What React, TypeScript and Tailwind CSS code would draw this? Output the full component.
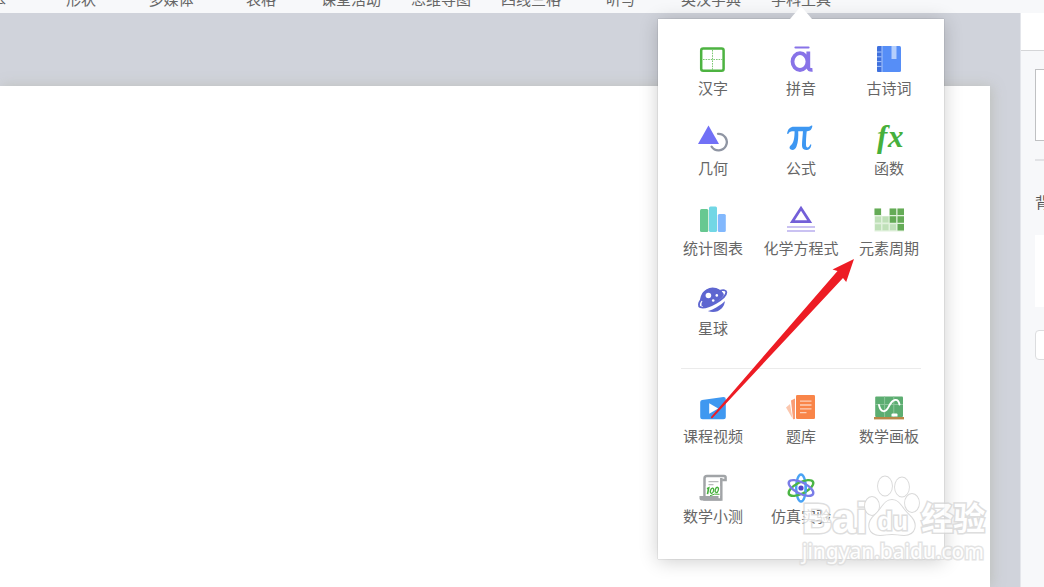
import type { ReactNode } from "react";

const tabs = ["文本", "形状", "多媒体", "表格", "课堂活动", "思维导图", "四线三格", "听写", "英汉字典"];

function Icon({ children }: { children: ReactNode }) {
  return (
    <svg viewBox="0 0 32 32" className="h-8 w-8" fill="none" aria-hidden="true">
      {children}
    </svg>
  );
}

const HanziIcon = (
  <Icon>
    <rect x="4.2" y="4.6" width="22.4" height="22.2" rx="2" stroke="#4db341" strokeWidth="2.5" />
    <path d="M15.5 6v20M6 15.5h20" stroke="#7cc873" strokeWidth="1" strokeDasharray="1.6 1" />
  </Icon>
);

const PinyinIcon = (
  <Icon>
    <path d="M10.500 3.500h13" stroke="#8873e8" strokeWidth="2.200" strokeLinecap="round" />
    <ellipse cx="15" cy="17.600" rx="7.500" ry="8.400" stroke="#8873e8" strokeWidth="3.800" />
    <path d="M23.300 7.500v15.700q0 3 4.200 2.600" stroke="#8873e8" strokeWidth="3.800" />
  </Icon>
);

const PoemIcon = (
  <Icon>
    <rect x="4" y="2" width="24" height="26" rx="1.5" fill="#568ef7" />
    <path d="M5.5 2H9v26H5.5q-1.5 0-1.5-1.5v-23Q4 2 5.5 2z" fill="#3f70dd" />
    <path d="M9 2v26M4 8h4.500M4 12.800h4.500M4 17.600h4.500M4 22.400h4.500" stroke="#a9c6fb" strokeWidth="1" />
    <path d="M18.500 2h5v13h-5z" fill="#b5cffc" />
  </Icon>
);

const GeometryIcon = (
  <Icon>
    <path d="M21 9.800a8.300 8.300 0 1 1-6.400 12.900" stroke="#8f95a3" strokeWidth="2.300" strokeLinecap="round" />
    <path d="M11.500 1.500L22 20H1z" fill="#7170f6" />
  </Icon>
);

const PiIcon = (
  <Icon>
    <path d="M2 9.800C3 4.800 5 2.800 9 2.800h13.500c2 0 3-.300 3.700-1.300l1.200.300c-.600 4-2.400 5.400-5.200 5.400H9c-3 0-4.700.400-5.800 2.700z" fill="#3d97f2" />
    <path d="M9.600 6.500h3.600c.300 6.300 0 11.500-1.700 16-1 2.800-3 3.900-5.200 3.300-2.100-.700-2.400-3.100-.700-4.400C8.700 19.300 9.600 14 9.600 6.500zM18 6.500h3.800c-.600 5.800-.900 11-.8 14.500.1 2.200 1 2.700 2.200 2.200 1-.500 1.600-1.400 2.200-2.900l1 .400c-.600 3.900-2.500 5.400-5.200 5.300-3.200-.1-4.300-2-4.200-5.400.1-4 .7-8.600 1-14.100z" fill="#3d97f2" />
  </Icon>
);

const FunctionIcon = (
  <Icon>
    <text
      y="22.500"
      className="font-['Liberation_Serif',serif] text-[31px] font-bold italic"
      fill="#46b03c"
    >
      <tspan x="4">f</tspan>
      <tspan x="15">x</tspan>
    </text>
  </Icon>
);

const ChartIcon = (
  <Icon>
    <rect x="3" y="5" width="8.300" height="23" rx="1.500" fill="#67c891" />
    <rect x="12" y="2.500" width="8" height="25.500" rx="1.500" fill="#72d7e5" />
    <rect x="20.800" y="10" width="8" height="18" rx="1.500" fill="#82b8fd" />
  </Icon>
);

const ChemistryIcon = (
  <Icon>
    <path d="M16 4.200L24.700 17.700H7.300z" stroke="#735fd8" strokeWidth="2.700" />
    <path d="M2 23h28M2 27h28" stroke="#b9afee" strokeWidth="1.600" />
  </Icon>
);

const PeriodicIcon = (
  <Icon>
    <path d="M1.500 4.500h7v7.500h7.500V4.500h15v23h-29.500z" fill="#e0f1dc" />
    <path d="M2 12.500h6v6H2zM2 20.200h6v6H2zM9.500 12.500h6v6h-6zM9.500 20.200h6v6h-6zM17 20.200h6v6h-6z" fill="#bfe0b8" />
    <path d="M1.500 4.500h6.500v6.500H1.500zM16.700 4.500h6.500v6.500h-6.500zM24.500 4.500H31v6.500h-6.500zM16.700 12.200h6.500v6.500h-6.500zM24.500 12.200H31v6.500h-6.500zM24.500 20H31v6.500h-6.500z" fill="#64ab56" />
  </Icon>
);

const PlanetIcon = (
  <Icon>
    <circle cx="16" cy="16" r="12" fill="#5e66d0" />
    <path d="M4.500 17.500c-3 4-3 6.600-1.500 7.300 6.500 3 25-7.300 26.500-14.300" stroke="#ffffff" strokeWidth="4.600" />
    <path d="M4.800 22A12 12 0 0 1 26.500 10C22.500 16.500 12 22.500 4.800 22z" fill="#5e66d0" />
    <path d="M4.600 14.800c-3.300 4.600-3.300 7.700-1.300 8.400C10 25.500 29.300 14.500 29.300 8.300c0-2.300-3-2.500-6.500-1.500" stroke="#5e66d0" strokeWidth="1.900" />
    <path d="M5 17c-1.200 2-1.500 3.400-1 4M25 7.500c1.800-.2 2.600.2 2.700 1" stroke="#fff" strokeWidth="1.100" />
    <circle cx="11.400" cy="11.500" r="2.800" fill="#fff" />
    <circle cx="19.800" cy="11.400" r="1.300" fill="#fff" />
    <circle cx="16.200" cy="16.500" r="1.300" fill="#fff" />
  </Icon>
);

const VideoIcon = (
  <Icon>
    <path d="M5 8L26.500 5q2.300 0 2.300 2.300v17.500q0 2.500-2.500 2.500H5.700q-2.500 0-2.500-2.500V10.200Q3.200 8.200 5 8z" fill="#3f98f0" />
    <path d="M12.200 11.200v10.600l9-5.300z" fill="#fff" />
  </Icon>
);

const QuestionIcon = (
  <Icon>
    <path d="M1 15.500l4-3.500 2.500 14.500z" fill="#fbc7ae" />
    <path d="M6 8.500L10 6.500V27l-2 .300z" fill="#fa9d75" />
    <rect x="11" y="3" width="19" height="24" rx="1.300" fill="#f98549" />
    <path d="M15 9.200h11.500M15 13h11.500M15 16.800h11.500M15 20.600h6.500" stroke="#fdd0b9" strokeWidth="1.300" />
  </Icon>
);

const BoardIcon = (
  <Icon>
    <rect x="2.200" y="4.500" width="27.800" height="20.500" rx="1" fill="#5cad71" />
    <path d="M11.600 4.500V25M2.200 12.500H30M20.800 4.500V25" stroke="#8cc69a" strokeWidth="1" />
    <path d="M6 13c1.500 7.500 6.500 8.500 10 1.200S25 5.500 26.500 12.500" stroke="#fff" strokeWidth="1.900" strokeLinecap="round" />
    <path d="M18.500 24.500v-2q0-1 1-1h4q1 0 1 1v2z" fill="#fff" />
    <rect x="1" y="25" width="30" height="2.400" fill="#b98748" />
  </Icon>
);

const QuizIcon = (
  <Icon>
    <path d="M24.300 6v21.500H7.500V6.500Q7.500 4 10 4h17q1.600 0 1.600 1.500V8h-3" stroke="#a1a4a7" strokeWidth="2.500" />
    <path d="M2.500 24h19v2.500l3 2H4.500q-2 0-2-2z" fill="#a1a4a7" />
    <path d="M8.800 14h14.300v10H8.800z" fill="#fff" />
    <path d="M11.500 9.600h10M11.500 12.600h5" stroke="#b9bbbd" strokeWidth="1.400" />
    <path d="M10 16.800l1.700-.9-1.200 6.300" stroke="#46b03c" strokeWidth="1.600" />
    <ellipse cx="15" cy="18.700" rx="1.500" ry="2.700" transform="rotate(16 15 18.700)" stroke="#46b03c" strokeWidth="1.300" />
    <ellipse cx="19.800" cy="17.900" rx="1.500" ry="2.700" transform="rotate(16 19.800 17.900)" stroke="#46b03c" strokeWidth="1.300" />
    <path d="M13 23.800q4.500-2.600 9.500-1.500" stroke="#46b03c" strokeWidth="1" />
  </Icon>
);

const AtomIcon = (
  <Icon>
    <ellipse cx="16" cy="16" rx="4.800" ry="13.500" stroke="#4aa3f5" strokeWidth="2.400" />
    <ellipse cx="16" cy="16" rx="13.500" ry="5.600" transform="rotate(-27 16 16)" stroke="#4bb544" strokeWidth="2.400" />
    <ellipse cx="16" cy="16" rx="13.500" ry="5.600" transform="rotate(27 16 16)" stroke="#7a7de8" strokeWidth="2.400" />
    <path d="M20.800 13.500q.2 3.500-.4 7" stroke="#4aa3f5" strokeWidth="2.400" />
    <circle cx="16" cy="16" r="2.600" fill="#5546c9" />
  </Icon>
);

type Tool = { name: string; icon: ReactNode };

const subjectTools: Tool[] = [
  { name: "汉字", icon: HanziIcon },
  { name: "拼音", icon: PinyinIcon },
  { name: "古诗词", icon: PoemIcon },
  { name: "几何", icon: GeometryIcon },
  { name: "公式", icon: PiIcon },
  { name: "函数", icon: FunctionIcon },
  { name: "统计图表", icon: ChartIcon },
  { name: "化学方程式", icon: ChemistryIcon },
  { name: "元素周期", icon: PeriodicIcon },
  { name: "星球", icon: PlanetIcon },
];

const resourceTools: Tool[] = [
  { name: "课程视频", icon: VideoIcon },
  { name: "题库", icon: QuestionIcon },
  { name: "数学画板", icon: BoardIcon },
  { name: "数学小测", icon: QuizIcon },
  { name: "仿真实验", icon: AtomIcon },
];

function ToolGrid({ tools }: { tools: Tool[] }) {
  return (
    <div className="grid grid-cols-3">
      {tools.map((tool) => (
        <button
          key={tool.name}
          type="button"
          className="flex h-20 flex-col items-center gap-px whitespace-nowrap text-[15px] leading-[22px] text-[#666666]"
        >
          {tool.icon}
          {tool.name}
        </button>
      ))}
    </div>
  );
}

function SubjectMenu() {
  return (
    <div className="absolute top-[19px] left-1/2 w-[286px] -translate-x-1/2 bg-white px-[11px] pt-[25px] pb-[7px] shadow-[0_2px_18px_rgba(0,0,0,0.2),0_0_1px_rgba(0,0,0,0.35)]">
      <svg viewBox="0 0 22 12" className="absolute -top-3 left-1/2 h-3 w-[22px] -translate-x-1/2" aria-hidden="true">
        <path d="M0 12L9.500 1q1.500-1 3 0L22 12z" fill="#fff" />
      </svg>
      <ToolGrid tools={subjectTools} />
      <hr className="mx-3 mt-1 mb-[23px] border-[#ebebeb]" />
      <ToolGrid tools={resourceTools} />
    </div>
  );
}

function Watermark() {
  return (
    <div className="pointer-events-none absolute top-[475px] right-[55px] z-30 w-[187px] font-['Liberation_Sans','Noto_Sans_CJK_SC',sans-serif] text-white opacity-80 [paint-order:stroke_fill] [-webkit-text-stroke:3px_#d6d6d6]">
      <div className="flex h-[62px] items-end">
        <span className="text-[42px] leading-9 font-bold">Bai</span>
        <div className="relative -ml-1 h-[62px] w-[58px]">
          <svg viewBox="0 0 58 62" className="h-[62px] w-[58px]" fill="#fff" stroke="#d0d0d0" strokeWidth="1.800" aria-hidden="true">
            <ellipse cx="9" cy="31" rx="7" ry="9" />
            <ellipse cx="22" cy="11" rx="7" ry="9.500" />
            <ellipse cx="39" cy="12" rx="7" ry="9.500" />
            <ellipse cx="49" cy="28" rx="7" ry="9" />
            <path d="M29 25c8 0 10 9 17 15 10 9 6 20-5 20-5 0-8-1-12-1s-7 1-12 1c-11 0-15-11-5-20 7-6 9-15 17-15z" />
          </svg>
          <span className="absolute bottom-0 left-3.5 text-[25px] leading-[32px] font-bold">du</span>
        </div>
        <span className="text-[32px] leading-[36px] font-bold whitespace-nowrap">经验</span>
      </div>
      <div className="font-['Noto_Sans',sans-serif] text-[21px] leading-7 [-webkit-text-stroke:3px_#dddddd]">jingyan.baidu.com</div>
    </div>
  );
}

function Sidebar() {
  return (
    <aside className="flex w-6 shrink-0 flex-col overflow-hidden border-l border-[#e4e6eb] bg-[#f7f8fa]">
      <div className="h-[38px] shrink-0 border-b border-[#d5d6d8] bg-white" />
      <div className="flex flex-col pl-3.5 whitespace-nowrap">
        <div className="mt-[18px] h-[72px] w-32 border border-[#c0c1c3] bg-white" />
        <div className="mt-[18px] h-0.5 w-32 bg-[#e2e3e6]" />
        <h2 className="mt-[30px] text-[15px] leading-[22px] text-[#555555]">背景</h2>
        <div className="mt-[22px] h-[72px] w-32 bg-white" />
        <button type="button" aria-label="背景" className="mt-[23px] h-[30px] w-32 rounded-sm border border-[#dcdddf] bg-white" />
      </div>
    </aside>
  );
}

export default function App() {
  return (
    <div className="relative flex h-screen flex-col overflow-hidden bg-[#d0d3db] font-['Noto_Sans_CJK_SC',sans-serif]">
      <header className="z-10 h-[13px] shrink-0 bg-[#f7f8fa]">
        <nav className="-ml-[54px] flex h-full items-end text-[15px] leading-[22px] whitespace-nowrap text-[#666666]">
          {tabs.map((tab) => (
            <button key={tab} type="button" className="w-[90px] shrink-0 pb-[3px]">
              {tab}
            </button>
          ))}
          <div className="relative h-full w-[90px] shrink-0">
            <div className="flex h-full items-end">
              <button type="button" className="w-full pb-[3px]">
                学科工具
              </button>
            </div>
            <SubjectMenu />
          </div>
        </nav>
      </header>
      <main className="flex min-h-0 flex-1">
        <section className="flex min-w-0 flex-1 pt-[73px] pr-[30px]">
          <div className="flex-1 bg-white shadow-[2px_0_12px_rgba(185,187,180,0.8)]" />
        </section>
        <Sidebar />
      </main>
      <svg viewBox="0 0 144 160" className="pointer-events-none absolute top-[259px] left-[711px] z-20 h-40 w-36" aria-hidden="true">
        <path d="M143 0L121.500 10.500l5 1.500L-.5 158.500l1.500 1L132 19l3.200 4z" fill="#ed1c24" />
      </svg>
      <Watermark />
    </div>
  );
}
